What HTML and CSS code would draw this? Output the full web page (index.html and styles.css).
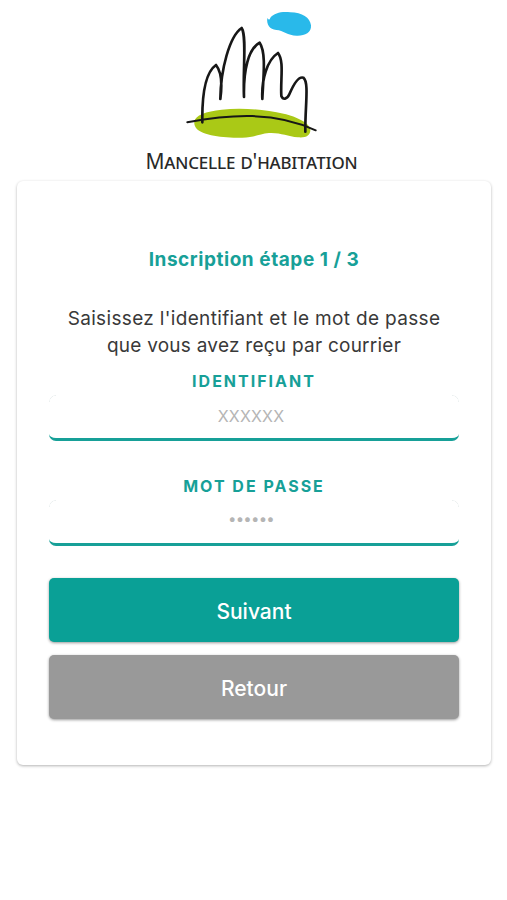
FILE: index.html
```html
<!DOCTYPE html>
<html lang="fr">
<head>
<meta charset="utf-8">
<meta name="viewport" content="width=device-width, initial-scale=1">
<title>Mancelle d'habitation</title>
<link rel="stylesheet" href="styles.css">
</head>
<body>
<header class="brand">
  <svg class="logo" viewBox="0 0 435 435" aria-hidden="true">
    <path fill="#29b9ea" d="M262 54Q268 64 271 53C283 39 304 34 331 37C367 38 390 53 393 76C395 99 373 108 350 107C323 107 310 91 289 90C269 88 259 74 262 54Z"/>
    <path fill="#aac916" d="M43 365C45 346 78 334 125 329C183 322 253 328 311 341C350 350 391 369 391 390C391 407 378 414 354 412C322 409 301 397 267 399C235 402 222 414 182 413C126 413 69 406 50 386C44 380 42 372 43 365Z"/>
    <g fill="none" stroke="#171717" stroke-linecap="round" stroke-linejoin="round">
      <path stroke-width="8" d="M67 367C66 300 72 220 108 195C125 216 127 253 121 297C122 210 148 109 185 84C201 109 188 210 192 291C190 210 205 147 239 128C259 157 250 230 247 297C244 240 261 180 294 159C313 183 301 239 304 288C309 300 321 299 328 283C341 252 355 228 370 233C388 247 375 318 376 395"/>
      <path stroke-width="6" d="M22 367C150 343 285 333 407 391"/>
    </g>
  </svg>
  <p class="brand-name">Mancelle d'habitation</p>
</header>
<main class="card">
  <h1 class="title">Inscription étape 1 / 3</h1>
  <p class="intro"><span class="line1">Saisissez l'identifiant et le mot de passe</span><br><span class="line2">que vous avez reçu par courrier</span></p>
  <form class="form">
    <label class="label" for="login">IDENTIFIANT</label>
    <input class="field" id="login" type="text" placeholder="XXXXXX">
    <label class="label label-password" for="password">MOT DE PASSE</label>
    <input class="field field-password" id="password" type="password" placeholder="••••••">
    <button class="button" type="button">Suivant</button>
    <button class="button button-back" type="button">Retour</button>
  </form>
</main>
</body>
</html>
```
FILE: styles.css
```css
* { box-sizing: border-box; }
body {
  min-height: 100vh;
  margin: 0;
  background: #fff;
  color: #393939;
  font-family: Inter, "Liberation Sans", sans-serif;
}
.brand { height: 181px; text-align: center; }
.logo { display: block; width: 145px; height: 145px; margin-left: 180px; }
.brand-name {
  margin: 0;
  padding-right: 4px;
  color: #292929;
  font: 21px/32px "Noto Sans", sans-serif;
  font-variant: small-caps;
  letter-spacing: -.18px;
  white-space: nowrap;
}
.card {
  width: 474px;
  height: 584px;
  margin-left: 17px;
  padding: 65px 32px 0;
  border-radius: 6px;
  background: #fff;
  box-shadow: 0 1px 3px rgba(0, 0, 0, .3);
  text-align: center;
}
.title {
  margin: 0;
  color: #17a098;
  font-size: 19px;
  font-weight: 700;
  line-height: 28px;
  letter-spacing: .55px;
  white-space: nowrap;
}
.intro { margin: 31px 0 0; font-size: 19px; line-height: 27px; white-space: nowrap; }
.line1 { letter-spacing: .34px; }
.line2 { letter-spacing: .25px; }
.form { display: flex; flex-direction: column; }
.label {
  height: 36px;
  color: #17a098;
  font-size: 16px;
  font-weight: 700;
  line-height: 45px;
  letter-spacing: 2px;
}
.label-password { height: 35px; margin-top: 24px; line-height: 43px; }
.field {
  width: 100%;
  height: 46px;
  margin: 0;
  padding: 0 14px 2px 8px;
  border: 0;
  border-bottom: 3px solid #17a098;
  border-radius: 7px;
  background:
    radial-gradient(circle at 7px 7px, transparent 6px, #e9eeee 6.5px, transparent 7.5px) 0 0 / 7px 7px no-repeat,
    radial-gradient(circle at 0 7px, transparent 6px, #e9eeee 6.5px, transparent 7.5px) 100% 0 / 7px 7px no-repeat;
  outline: 0;
  font: 16px Inter, sans-serif;
  letter-spacing: .2px;
  text-align: center;
}
.field-password { padding: 0 14px 7px 8px; font-size: 15px; letter-spacing: -.8px; }
.field::placeholder { color: #b5b5b5; opacity: 1; }
.button {
  height: 64px;
  margin: 32px 0 0;
  padding: 2px 6px 0;
  border: 0;
  border-radius: 5px;
  background: #0aa096;
  box-shadow: 0 1px 3px rgba(0, 0, 0, .4);
  color: #fff;
  font: 500 21px Inter, sans-serif;
}
.button-back { margin-top: 13px; background: #999; }
```
